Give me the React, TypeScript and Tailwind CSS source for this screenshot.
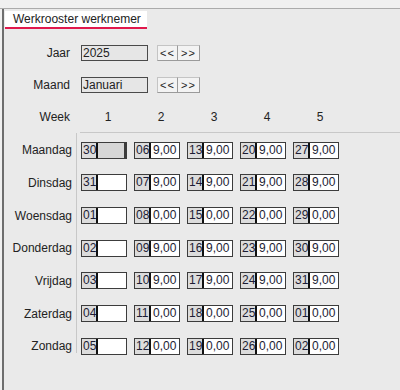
import React from 'react'

type Cell = [string, string, boolean?]

const rows: { day: string; cells: Cell[] }[] = [
  { day: 'Maandag', cells: [['30', '', true], ['06', '9,00'], ['13', '9,00'], ['20', '9,00'], ['27', '9,00']] },
  { day: 'Dinsdag', cells: [['31', ''], ['07', '9,00'], ['14', '9,00'], ['21', '9,00'], ['28', '9,00']] },
  { day: 'Woensdag', cells: [['01', ''], ['08', '0,00'], ['15', '0,00'], ['22', '0,00'], ['29', '0,00']] },
  { day: 'Donderdag', cells: [['02', ''], ['09', '9,00'], ['16', '9,00'], ['23', '9,00'], ['30', '9,00']] },
  { day: 'Vrijdag', cells: [['03', ''], ['10', '9,00'], ['17', '9,00'], ['24', '9,00'], ['31', '9,00']] },
  { day: 'Zaterdag', cells: [['04', ''], ['11', '0,00'], ['18', '0,00'], ['25', '0,00'], ['01', '0,00']] },
  { day: 'Zondag', cells: [['05', ''], ['12', '0,00'], ['19', '0,00'], ['26', '0,00'], ['02', '0,00']] },
]

function NavButtons() {
  return (
    <div className="flex ml-[9px]">
      <button className="w-[21px] h-[16px] bg-[#f3f3f3] border border-[#c4c4c4] border-r-[#9a9a9a] border-b-[#9a9a9a] text-[11px] leading-[13px] text-[#222] tracking-[1px]">
        &lt;&lt;
      </button>
      <button className="w-[22px] h-[16px] bg-[#f3f3f3] border border-[#c4c4c4] border-l-0 border-r-[#9a9a9a] border-b-[#9a9a9a] text-[11px] leading-[13px] text-[#222] tracking-[1px]">
        &gt;&gt;
      </button>
    </div>
  )
}

function DayCell({ cell }: { cell: Cell }) {
  const [num, value, disabled] = cell
  return (
    <div className="flex w-[46px] h-[17px] border border-[#3c3c3c] text-[12px] leading-[15px]">
      <div className="w-[16px] overflow-hidden whitespace-nowrap bg-[#dcdcdc] text-[#1c1c34] pl-[1px] border-r-2 border-[#111]">
        {num}
      </div>
      <div
        className={
          disabled
            ? 'flex-1 bg-[#d6d6d6] border-r-2 border-[#3c3c3c]'
            : 'flex-1 bg-white pl-[2px] text-[#1c1c34]'
        }
      >
        {value}
      </div>
    </div>
  )
}

export default function App() {
  return (
    <div className="w-[400px] h-[390px] bg-[#f0f0f0] pt-[8px] overflow-hidden font-['Liberation_Sans',Arial,sans-serif] text-[12px] text-[#222]">
      <div className="h-full border-t border-[#ababab] pl-[2px]">
        <div className="h-full bg-[#eaeaea] border-l-2 border-[#6e6e6e]">
          <div className="pt-[2px] pl-[1px]">
            <div className="w-[142px] h-[18px] bg-white border-b-2 border-[#e0184c] pl-[8px] leading-[16px] text-[#222]">
              Werkrooster werknemer
            </div>
          </div>

          <div className="flex items-center mt-[16px] h-[16px]">
            <div className="w-[66px] text-right">Jaar</div>
            <div className="ml-[11px] w-[67px] h-[16px] border border-[#4a4a4a] bg-[#e6e6e6] pl-[1px] leading-[14px]">
              2025
            </div>
            <NavButtons />
          </div>

          <div className="flex items-center mt-[16px] h-[16px]">
            <div className="w-[66px] text-right">Maand</div>
            <div className="ml-[11px] w-[67px] h-[16px] border border-[#4a4a4a] bg-[#e6e6e6] pl-[1px] leading-[14px]">
              Januari
            </div>
            <NavButtons />
          </div>

          <div className="flex items-start mt-[16px]">
            <div className="w-[66px] text-right leading-[16px]">Week</div>
            <div className="ml-[10px] flex-1 h-[24px] border-b border-[#c8c8c8] pl-[1px] flex gap-[7px] leading-[16px]">
              {[1, 2, 3, 4, 5].map((n) => (
                <div key={n} className="w-[46px] pl-[8px] text-center">
                  {n}
                </div>
              ))}
            </div>
          </div>

          <div className="flex">
            <div className="w-[68px] pt-[1px]">
              {rows.map((r) => (
                <div key={r.day} className="h-[32.67px] flex items-center justify-end">
                  {r.day}
                </div>
              ))}
            </div>
            <div className="ml-[4px] h-[220px] border-l border-[#c8c8c8] pl-[4px] pt-[1px]">
              {rows.map((r) => (
                <div key={r.day} className="h-[32.67px] flex items-center gap-[7px]">
                  {r.cells.map((c, i) => (
                    <DayCell key={i} cell={c} />
                  ))}
                </div>
              ))}
            </div>
          </div>
        </div>
      </div>
    </div>
  )
}
